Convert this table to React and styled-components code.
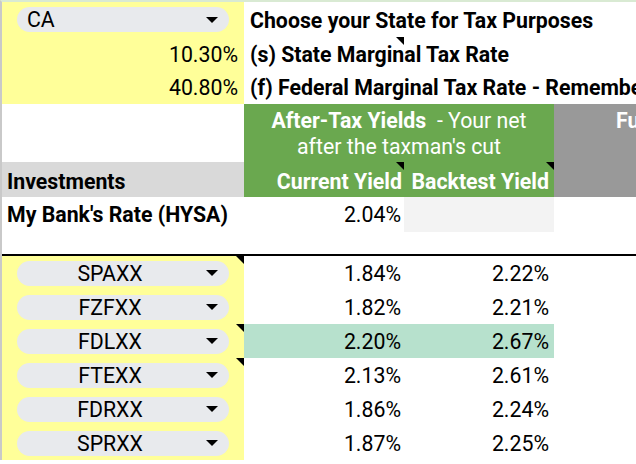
import React from "react";
import styled, { createGlobalStyle } from "styled-components";

const GlobalStyle = createGlobalStyle`
  html, body { margin: 0; padding: 0; background: #fff; overflow: hidden; }
  body { font-family: Roboto, "Liberation Sans", Arial, sans-serif; }
`;

const funds = [
  { ticker: "SPAXX", current: "1.84%", backtest: "2.22%", note: true },
  { ticker: "FZFXX", current: "1.82%", backtest: "2.21%" },
  { ticker: "FDLXX", current: "2.20%", backtest: "2.67%", note: true, best: true },
  { ticker: "FTEXX", current: "2.13%", backtest: "2.61%", note: true },
  { ticker: "FDRXX", current: "1.86%", backtest: "2.24%" },
  { ticker: "SPRXX", current: "1.87%", backtest: "2.25%" },
];

const Arrow = () => (
  <svg width="12" height="6" viewBox="0 0 12 6">
    <path d="M0 0h12L6 6z" fill="#000" />
  </svg>
);

const App = () => {
  return (
    <>
      <GlobalStyle />
      <Sheet>
        {/* settings */}
        <InputCell>
          <Pill>
            <PillLabel>CA</PillLabel>
            <ArrowBox><Arrow /></ArrowBox>
          </Pill>
        </InputCell>
        <LabelCell>Choose your State for Tax Purposes</LabelCell>
        <Blank $span={2} />

        <InputCell $valign="flex-end" $justify="flex-end">10.30%</InputCell>
        <LabelCell>
          (s) State Marginal Tax Rate
          <NoteMark />
        </LabelCell>
        <Blank $span={2} />

        <InputCell $valign="flex-end" $justify="flex-end">40.80%</InputCell>
        <LabelCell>(f) Federal Marginal Tax Rate - Remember</LabelCell>
        <Blank $span={2} />

        {/* headers */}
        <Blank />
        <TitleHeader>
          <div>
            <Strong>After-Tax Yields</Strong>&nbsp; - Your net
            <br />
            after the taxman's cut
          </div>
        </TitleHeader>
        <SideHeader>Fu</SideHeader>

        <SectionLabel>Investments</SectionLabel>
        <ColHeader $pr={2}>
          Current Yield
          <NoteMark />
        </ColHeader>
        <ColHeader $pr={5}>
          Backtest Yield
          <NoteMark />
        </ColHeader>

        <BankLabel>My Bank's Rate (HYSA)</BankLabel>
        <NumCell $pr={3}>2.04%</NumCell>
        <NumCell $bg="#f3f3f3" />
        <Blank />

        <Blank $span={4} />
        <Divider />

        {funds.map((f) => (
          <React.Fragment key={f.ticker}>
            <InputCell>
              <Pill>
                <PillLabel $center>{f.ticker}</PillLabel>
                <ArrowBox><Arrow /></ArrowBox>
              </Pill>
              {f.note && <NoteMark />}
            </InputCell>
            <NumCell $pr={3} $bg={f.best ? "#b7e1cd" : undefined}>{f.current}</NumCell>
            <NumCell $pr={5} $bg={f.best ? "#b7e1cd" : undefined}>{f.backtest}</NumCell>
            <Blank />
          </React.Fragment>
        ))}
      </Sheet>
    </>
  );
};

export default App;

const Sheet = styled.div`
  display: grid;
  grid-template-columns: 242px 160px 150px 1fr;
  grid-template-rows: 35px 34px 33px 58px 35px 35px 22px 2px repeat(6, 34px);
  width: 634px;
  border-left: 2px solid #c9c9c9;
  border-top: 2px solid #d9ead3;
  font-size: 21.3px;
  color: #000;
`;

const Cell = styled.div`
  position: relative;
  display: flex;
  min-width: 0;
  white-space: nowrap;
  box-sizing: border-box;
`;

const Blank = styled(Cell)`
  grid-column: span ${(p) => p.$span || 1};
`;

const InputCell = styled(Cell)`
  background: #ffff99;
  align-items: ${(p) => p.$valign || "center"};
  justify-content: ${(p) => p.$justify || "stretch"};
  padding: 0 6px 4px 15px;
  ${(p) => (p.$valign ? "" : "padding: 0 15px;")}
`;

const LabelCell = styled(Cell)`
  align-items: flex-end;
  padding: 0 0 4px 6px;
  font-weight: 700;
  z-index: 1;
`;

const Pill = styled.div`
  display: flex;
  align-items: center;
  width: 100%;
  height: 25px;
  border-radius: 13px;
  background: #e8eaed;
  padding-left: 10px;
  box-sizing: border-box;
`;

const PillLabel = styled.span`
  flex: 1;
  text-align: ${(p) => (p.$center ? "center" : "left")};
  font-size: 21.3px;
  line-height: 25px;
`;

const ArrowBox = styled.span`
  display: flex;
  width: 36px;
  padding-left: 13px;
  box-sizing: border-box;
`;

const NoteMark = styled.span`
  position: absolute;
  top: 0;
  right: 0;
  width: 0;
  height: 0;
  border-top: 8px solid #000;
  border-left: 8px solid transparent;
`;

const TitleHeader = styled(Cell)`
  grid-column: span 2;
  background: #6aa84f;
  color: #fff;
  justify-content: center;
  align-items: flex-end;
  padding-bottom: 2px;
  line-height: 26px;
  text-align: center;
`;

const Strong = styled.span`
  font-weight: 700;
`;

const SideHeader = styled(Cell)`
  grid-row: span 2;
  background: #999999;
  color: #fff;
  font-weight: 700;
  line-height: 26px;
  padding: 4px 0 0 62px;
  overflow: hidden;
`;

const SectionLabel = styled(Cell)`
  background: #d9d9d9;
  font-weight: 700;
  align-items: flex-end;
  padding: 0 0 3px 5px;
`;

const ColHeader = styled(Cell)`
  background: #6aa84f;
  color: #fff;
  font-weight: 700;
  align-items: flex-end;
  justify-content: flex-end;
  padding: 0 ${(p) => p.$pr}px 3px 0;
`;

const BankLabel = styled(Cell)`
  font-weight: 700;
  align-items: center;
  padding-left: 5px;
`;

const NumCell = styled(Cell)`
  align-items: center;
  justify-content: flex-end;
  padding-right: ${(p) => p.$pr || 0}px;
  background: ${(p) => p.$bg || "transparent"};
`;

const Divider = styled.div`
  grid-column: 1 / -1;
  background: #000;
`;
